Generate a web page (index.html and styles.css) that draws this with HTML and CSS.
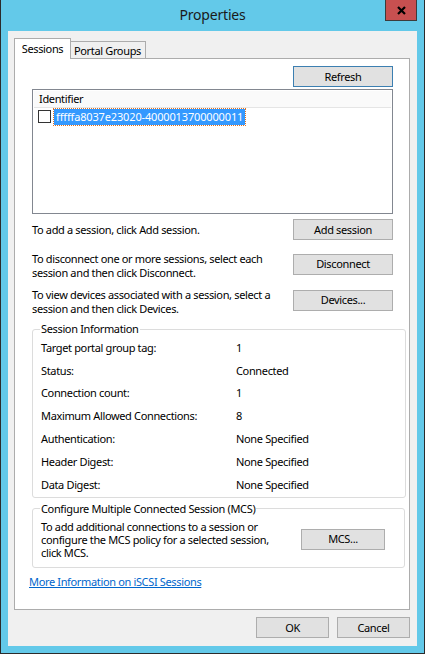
FILE: index.html
```html
<!DOCTYPE html>
<html lang="en">
<head>
    <meta charset="UTF-8">
    <meta name="viewport" content="width=device-width, initial-scale=1.0">
    <title>Properties</title>
    <link rel="stylesheet" href="styles.css">
</head>
<body>
    <div class="window">
        <!-- Title bar -->
        <div class="titlebar">
            <span class="title">Properties</span>
            <button class="close" aria-label="Close">
                <svg width="9" height="9" viewBox="0 0 9 9">
                    <path d="M1 1 L8 8 M8 1 L1 8" stroke="#000" stroke-width="2.2" fill="none"/>
                </svg>
            </button>
        </div>

        <div class="client">
            <!-- Tabs -->
            <div class="tabs">
                <div class="tab active">Sessions</div>
                <div class="tab">Portal Groups</div>
            </div>

            <div class="panel">
                <div class="toolbar">
                    <button class="btn default">Refresh</button>
                </div>

                <!-- Session list -->
                <div class="listbox">
                    <div class="list-head">Identifier</div>
                    <div class="list-item">
                        <span class="check"></span>
                        <span class="item-text">fffffa8037e23020-4000013700000011</span>
                    </div>
                </div>

                <div class="action-row first">
                    <p class="hint single">To add a session, click Add session.</p>
                    <button class="btn">Add session</button>
                </div>
                <div class="action-row second">
                    <p class="hint">To disconnect one or more sessions, select each session and then click Disconnect.</p>
                    <button class="btn">Disconnect</button>
                </div>
                <div class="action-row third">
                    <p class="hint">To view devices associated with a session, select a session and then click Devices.</p>
                    <button class="btn">Devices...</button>
                </div>

                <!-- Session information -->
                <fieldset class="group info">
                    <legend>Session Information</legend>
                    <div class="info-row"><span class="label">Target portal group tag:</span><span>1</span></div>
                    <div class="info-row"><span class="label">Status:</span><span>Connected</span></div>
                    <div class="info-row"><span class="label">Connection count:</span><span>1</span></div>
                    <div class="info-row"><span class="label">Maximum Allowed Connections:</span><span>8</span></div>
                    <div class="info-row"><span class="label">Authentication:</span><span>None Specified</span></div>
                    <div class="info-row"><span class="label">Header Digest:</span><span>None Specified</span></div>
                    <div class="info-row"><span class="label">Data Digest:</span><span>None Specified</span></div>
                </fieldset>

                <!-- MCS -->
                <fieldset class="group mcs">
                    <legend>Configure Multiple Connected Session (MCS)</legend>
                    <div class="mcs-body">
                        <p class="mcs-text">To add additional connections to a session or configure the MCS policy for a selected session, click MCS.</p>
                        <button class="btn mcs-btn">MCS...</button>
                    </div>
                </fieldset>

                <a class="more-link" href="#">More Information on iSCSI Sessions</a>
            </div>

            <div class="footer">
                <button class="btn small">OK</button>
                <button class="btn small">Cancel</button>
            </div>
        </div>
    </div>
</body>
</html>
```

FILE: styles.css
```css
* {
    box-sizing: border-box;
}
body {
    margin: 0;
    font-family: "Noto Sans", "Open Sans", sans-serif;
    font-size: 11px;
    letter-spacing: -0.35px;
    color: #000;
    background: #fff;
}
button {
    font-family: inherit;
    font-size: inherit;
    letter-spacing: inherit;
    color: #000;
}
.window {
    width: 425px;
    height: 654px;
    background: #63c9e9;
    border: 1px solid #2b2b2b;
    border-top: none;
    padding: 0 7px 7px 7px;
}
.titlebar {
    height: 31px;
    display: flex;
    justify-content: center;
    position: relative;
}
.title {
    font-size: 14px;
    letter-spacing: -0.2px;
    line-height: 30px;
    color: #1a1a1a;
}
.close {
    position: absolute;
    top: 0;
    right: 0;
    width: 32px;
    height: 21px;
    background: #c75050;
    border: 1px solid #3c3c3c;
    border-top: none;
    padding: 0;
    display: flex;
    align-items: center;
    justify-content: center;
}
.client {
    background: #f0f0f0;
    height: 615px;
    padding: 7px 7px 0 6px;
}

/* Tabs */
.tabs {
    display: flex;
    align-items: flex-start;
    height: 21px;
    position: relative;
    z-index: 1;
}
.tab {
    border: 1px solid #acacac;
    border-bottom: none;
    background: #f0f0f0;
    padding: 0 4px 0 3px;
    line-height: 17px;
    height: 17px;
    margin-top: 3px;
    margin-left: -1px;
}
.tab.active {
    background: #fff;
    height: 21px;
    width: 57px;
    margin-top: 0;
    margin-left: 0;
    padding: 1px 0 0 0;
    text-align: center;
    line-height: 18px;
    position: relative;
    z-index: 2;
}
.panel {
    background: #fff;
    border: 1px solid #acacac;
    height: 552px;
    margin-top: -1px;
    padding: 7px 16px 0 17px;
}

/* Buttons */
.btn {
    width: 100px;
    height: 21px;
    background: #e1e1e1;
    border: 1px solid #adadad;
    padding: 0;
    line-height: 18px;
}
.btn.default {
    border-color: #3c7fb1;
}
.toolbar {
    display: flex;
    justify-content: flex-end;
}

/* List */
.listbox {
    margin-top: 2px;
    height: 125px;
    border: 1px solid #828790;
    padding: 1px;
}
.list-head {
    height: 17px;
    background: #fafafa;
    border-bottom: 1px solid #e5e5e5;
    padding-left: 5px;
    line-height: 16px;
}
.list-item {
    display: flex;
    align-items: center;
    margin-top: 0;
    height: 17px;
    padding-left: 4px;
}
.check {
    width: 13px;
    height: 13px;
    border: 1px solid #333;
    background: #fff;
    margin-right: 3px;
}
.item-text {
    background: #3399ff;
    color: #fff;
    outline: 1px dotted #e07020;
    padding: 0 2px 0 2px;
    line-height: 16px;
    letter-spacing: -0.15px;
}

/* Action rows */
.action-row {
    display: flex;
    justify-content: space-between;
    align-items: center;
}
.action-row.first {
    margin-top: 5px;
}
.action-row.second {
    margin-top: 8px;
}
.action-row.third {
    margin-top: 4px;
}
.hint {
    margin: 0;
    width: 240px;
    line-height: 14px;
    padding-top: 4px;
}
.hint.single {
    width: auto;
    padding-top: 1px;
}

/* Group boxes */
.group {
    border: 1px solid #dcdcdc;
    border-radius: 3px;
    margin: 6px -13px 0 0;
    padding: 0 7px 1px 7px;
}
.group legend {
    padding: 0 1px;
    line-height: 14px;
}
.info-row {
    display: flex;
    height: 22.8px;
    align-items: center;
    padding-left: 1px;
}
.label {
    width: 195px;
}
.group.mcs {
    margin-top: 4px;
    margin-right: -12px;
    padding-bottom: 8px;
}
.mcs-body {
    display: flex;
    align-items: center;
    padding: 4px 0 0 1px;
}
.mcs-text {
    margin: 0;
    width: 240px;
    line-height: 13px;
}
.mcs-btn {
    width: 84px;
    margin-left: 20px;
}
.more-link {
    display: block;
    margin: 7px 0 0 -3px;
    line-height: 14px;
    color: #0066cc;
    width: max-content;
}

/* Footer */
.footer {
    display: flex;
    justify-content: flex-end;
    gap: 8px;
    margin-top: 7px;
}
.btn.small {
    width: 73px;
}
```
